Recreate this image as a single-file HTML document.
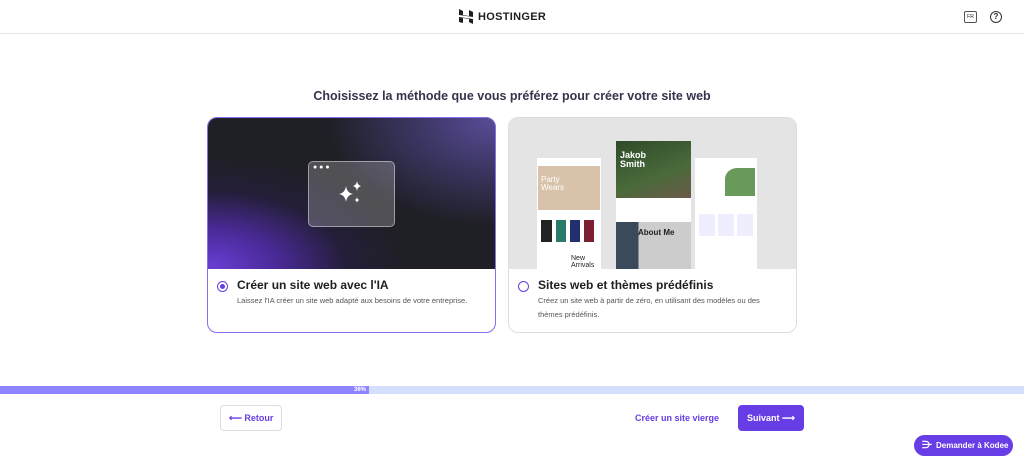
<!DOCTYPE html>
<html><head><meta charset="utf-8"><style>
*{margin:0;padding:0;box-sizing:border-box}
body{width:1024px;height:463px;background:#fff;font-family:"Liberation Sans",sans-serif;position:relative;overflow:hidden;color:#1d1e20}
.hdr{position:absolute;left:0;top:0;width:1024px;height:34px;border-bottom:1px solid #e6e6e6}
.logo{position:absolute;left:459px;top:9px;display:flex;align-items:center;gap:5px;font-weight:bold;font-size:11px;letter-spacing:.3px}
.abs{position:absolute}
h1{position:absolute;top:89px;left:0;width:1024px;text-align:center;font-size:12.5px;font-weight:bold;color:#36344d}
.card{position:absolute;top:117px;width:289px;height:216px;border-radius:10px;overflow:hidden;background:#fff}
.t{position:absolute;left:29px;font-size:12px;font-weight:bold;color:#1d1e20}
.d{position:absolute;left:29px;font-size:7.5px;color:#555;line-height:14px}
.radio{position:absolute;left:9px;top:163px;width:11px;height:11px;border:1.5px solid #673de6;border-radius:50%}
</style></head><body>
<div class="hdr">
 <div class="logo"><svg width="14" height="15" viewBox="0 0 14 15"><path d="M0 0l4 2v4l6 1V1l4 2v5L0 6zM0 8l14 2v5l-4-2V10L4 9v5L0 13z" fill="#1d1e20"/></svg>HOSTINGER</div>
 <div class="abs" style="left:964px;top:11px;width:13px;height:12px;border:1px solid #555;border-radius:2px;font-size:5px;text-align:center;line-height:10px">FR</div>
 <div class="abs" style="left:990px;top:11px;width:12px;height:12px;border:1.3px solid #333;border-radius:50%;font-size:8px;text-align:center;line-height:10px;font-weight:bold">?</div>
</div>
<h1>Choisissez la méthode que vous préférez pour créer votre site web</h1>
<div class="card" style="left:207px;border:1.5px solid #8c6cf0">
 <div class="abs" style="left:0;top:0;width:289px;height:151px;background:radial-gradient(ellipse 230px 130px at 0% 100%,#6a3fd6 0%,#4a2a99 30%,rgba(40,30,70,.6) 60%,transparent 85%),radial-gradient(ellipse 190px 120px at 100% 0%,#5a4d9a 0%,#3a3560 45%,transparent 90%),#1f1f26"></div>
 <div class="abs" style="left:100px;top:43px;width:87px;height:66px;border:1px solid rgba(255,255,255,.45);border-radius:5px;background:rgba(255,255,255,.22)">
  <div class="abs" style="left:4px;top:2px;color:#fff;font-size:7px;letter-spacing:0px">● ● ●</div>
  <svg class="abs" style="left:28px;top:18px" width="28" height="28" viewBox="0 0 28 28"><path d="M9 6Q10 13 16 14Q10 15 9 22Q8 15 2 14Q8 13 9 6Z M20 1Q20.5 5 24 6Q20.5 7 20 11Q19.5 7 16 6Q19.5 5 20 1Z M20 17Q20.3 19.5 22.5 20Q20.3 20.5 20 23Q19.7 20.5 17.5 20Q19.7 19.5 20 17Z" fill="#fff"/></svg>
 </div>
 <div class="radio" style="padding:2px"><div style="width:100%;height:100%;background:#673de6;border-radius:50%"></div></div>
 <div class="t" style="top:160px">Créer un site web avec l'IA</div>
 <div class="d" style="top:176px">Laissez l'IA créer un site web adapté aux besoins de votre entreprise.</div>
</div>
<div class="card" style="left:508px;border:1px solid #ddd">
 <div class="abs" style="left:0;top:0;width:289px;height:151px;background:#e4e4e4"></div>
 <div class="abs" style="left:28px;top:40px;width:64px;height:111px;background:#fff">
  <div class="abs" style="left:1px;top:8px;width:62px;height:44px;background:#d9c2aa"></div>
  <div class="abs" style="left:4px;top:18px;font-size:8px;color:#fff;line-height:8px">Party<br>Wears</div>
  <div class="abs" style="left:4px;top:62px;width:56px;height:22px;background:linear-gradient(90deg,#222 0 20%,#fff 20% 27%,#2a7a6a 27% 45%,#fff 45% 52%,#223070 52% 70%,#fff 70% 77%,#7a2030 77% 95%,#fff 95%)"></div>
  <div class="abs" style="left:34px;top:97px;font-size:7px;line-height:7px">New<br>Arrivals</div>
 </div>
 <div class="abs" style="left:107px;top:23px;width:75px;height:128px;background:#fff">
  <div class="abs" style="left:0;top:0;width:75px;height:57px;background:linear-gradient(160deg,#2e4a2a,#4a6a3a 60%,#6a5a4a)"></div>
  <div class="abs" style="left:4px;top:10px;font-size:9px;color:#fff;font-weight:bold;line-height:9px">Jakob<br>Smith</div>
  <div class="abs" style="left:0;top:81px;width:75px;height:47px;background:linear-gradient(90deg,#3a4a5a 30%,#ccc 30%)"></div>
  <div class="abs" style="left:22px;top:87px;font-size:8px;font-weight:bold">About Me</div>
 </div>
 <div class="abs" style="left:186px;top:40px;width:62px;height:111px;background:#fff">
  <div class="abs" style="left:30px;top:10px;width:30px;height:28px;background:#6a9a5a;border-radius:40% 0 0 0"></div>
  <div class="abs" style="left:4px;top:56px;width:54px;height:22px;background:linear-gradient(90deg,#eef 0 30%,#fff 30% 35%,#eef 35% 65%,#fff 65% 70%,#eef 70%)"></div>
 </div>
 <div class="radio" style="top:163px;left:9px"></div>
 <div class="t" style="top:160px">Sites web et thèmes prédéfinis</div>
 <div class="d" style="top:176px">Créez un site web à partir de zéro, en utilisant des modèles ou des<br>thèmes prédéfinis.</div>
</div>
<div class="abs" style="left:0;top:386px;width:1024px;height:8px;background:#d5defc"></div>
<div class="abs" style="left:0;top:386px;width:369px;height:8px;background:#8c85ff;font-size:6px;color:#fff;text-align:right;padding-right:3px;line-height:8px;font-weight:bold">36%</div>
<div class="abs" style="left:220px;top:405px;width:62px;height:26px;border:1px solid #ddd;border-radius:4px;color:#673de6;font-size:9px;font-weight:bold;line-height:24px;padding-left:8px">⟵ Retour</div>
<div class="abs" style="left:635px;top:413px;color:#673de6;font-size:9px;font-weight:bold">Créer un site vierge</div>
<div class="abs" style="left:738px;top:405px;width:66px;height:26px;background:#673de6;border-radius:4px;color:#fff;font-size:9px;font-weight:bold;line-height:26px;padding-left:9px">Suivant ⟶</div>
<div class="abs" style="left:914px;top:435px;width:99px;height:21px;background:#673de6;border-radius:11px;color:#fff;font-size:8px;font-weight:bold;line-height:21px;padding-left:22px">Demander à Kodee<span class="abs" style="left:8px;top:0;font-size:10px">⋺</span></div>
</body></html>
